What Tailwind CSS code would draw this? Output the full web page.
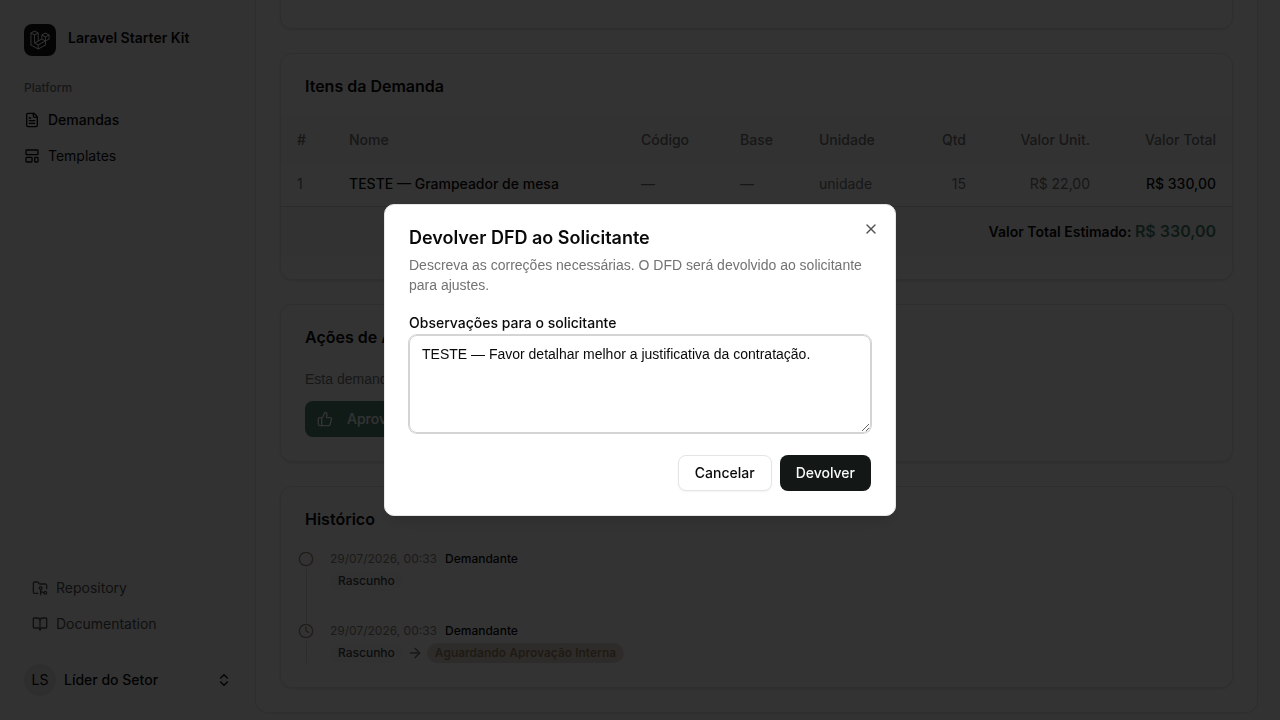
<!DOCTYPE html>
<html lang="pt-BR">
<head>
  <meta charset="UTF-8" />
  <meta name="viewport" content="width=device-width, initial-scale=1.0"/>
  <title>Demanda - Laravel Starter Kit</title>
  <script src="https://cdn.jsdelivr.net/npm/@tailwindcss/browser@4"></script>
  <style>
    body, button {
      font-family: Inter, "Liberation Sans", sans-serif;
    }
    .copy {
      font-family: "Liberation Sans", sans-serif;
    }
  </style>
</head>
<body class="h-screen overflow-hidden bg-neutral-50 text-neutral-950 flex pr-[15px]">

  <!-- Sidebar -->
  <aside class="w-64 shrink-0 p-2 flex flex-col text-sm">
    <div class="p-2">
      <a href="#" class="flex items-center gap-3 h-12 px-2 font-semibold">
        <span class="size-8 rounded-lg bg-neutral-900 flex items-center justify-center">
          <svg class="size-5 fill-white" viewBox="0 0 40 42"><path fill-rule="evenodd" clip-rule="evenodd" d="M17.2 5.633 8.6.855 0 5.633v26.51l16.2 9 16.2-9v-8.442l7.6-4.223V9.856l-8.6-4.777-8.6 4.777V18.3l-5.6 3.111V5.633ZM38 18.301l-5.6 3.11v-6.157l5.6-3.11V18.3Zm-1.06-7.856-5.54 3.078-5.54-3.079 5.54-3.078 5.54 3.079ZM24.8 18.3v-6.157l5.6 3.111v6.158L24.8 18.3Zm-1 1.732 5.54 3.078-13.14 7.302-5.54-3.078 13.14-7.3v-.002Zm-16.2 7.89 7.6 4.222V38.3L2 30.966V7.92l5.6 3.111v16.892ZM8.6 9.3 3.06 6.222 8.6 3.143l5.54 3.08L8.6 9.3Zm21.8 15.51-13.2 7.334V38.3l13.2-7.334v-6.156ZM9.6 11.034l5.6-3.11v14.6l-5.6 3.11v-14.6Z"/></svg>
        </span>
        <span class="pb-1">Laravel Starter Kit</span>
      </a>
    </div>

    <nav class="px-2 flex-1">
      <div class="h-8 px-2 flex items-center text-xs font-medium text-neutral-500">Platform</div>
      <div class="flex flex-col gap-1">
        <a href="#" class="h-8 px-2 flex items-center gap-2 rounded-lg bg-neutral-100/50 font-medium">
          <svg class="size-4" viewBox="0 0 24 24" fill="none" stroke="currentColor" stroke-width="2" stroke-linecap="round" stroke-linejoin="round"><path d="M15 2H6a2 2 0 0 0-2 2v16a2 2 0 0 0 2 2h12a2 2 0 0 0 2-2V7Z"/><path d="M14 2v4a2 2 0 0 0 2 2h4"/><path d="M10 9H8"/><path d="M16 13H8"/><path d="M16 17H8"/></svg>
          Demandas
        </a>
        <a href="#" class="h-8 px-2 flex items-center gap-2 rounded-lg">
          <svg class="size-4" viewBox="0 0 24 24" fill="none" stroke="currentColor" stroke-width="2" stroke-linecap="round" stroke-linejoin="round"><rect width="18" height="7" x="3" y="3" rx="1"/><rect width="9" height="7" x="3" y="14" rx="1"/><rect width="5" height="7" x="16" y="14" rx="1"/></svg>
          Templates
        </a>
      </div>
    </nav>

    <div class="p-2 flex flex-col gap-2">
      <div class="p-2 flex flex-col gap-1 text-neutral-600">
        <a href="#" class="h-8 px-2 flex items-center gap-2">
          <svg class="size-4" viewBox="0 0 24 24" fill="none" stroke="currentColor" stroke-width="2" stroke-linecap="round" stroke-linejoin="round"><path d="M9 20H4a2 2 0 0 1-2-2V5a2 2 0 0 1 2-2h3.9a2 2 0 0 1 1.69.9l.81 1.2a2 2 0 0 0 1.67.9H20a2 2 0 0 1 2 2v5"/><circle cx="13" cy="12" r="2"/><path d="M18 19c-2.8 0-5-2.2-5-5v8"/><circle cx="20" cy="19" r="2"/></svg>
          Repository
        </a>
        <a href="#" class="h-8 px-2 flex items-center gap-2">
          <svg class="size-4" viewBox="0 0 24 24" fill="none" stroke="currentColor" stroke-width="2" stroke-linecap="round" stroke-linejoin="round"><path d="M12 7v14"/><path d="M3 18a1 1 0 0 1-1-1V4a1 1 0 0 1 1-1h5a4 4 0 0 1 4 4 4 4 0 0 1 4-4h5a1 1 0 0 1 1 1v13a1 1 0 0 1-1 1h-6a3 3 0 0 0-3 3 3 3 0 0 0-3-3z"/></svg>
          Documentation
        </a>
      </div>
      <button class="h-12 px-2 flex items-center gap-2 text-left">
        <span class="size-8 rounded-full bg-neutral-200 flex items-center justify-center">LS</span>
        <span class="flex-1 font-medium">Líder do Setor</span>
        <svg class="size-4" viewBox="0 0 24 24" fill="none" stroke="currentColor" stroke-width="2" stroke-linecap="round" stroke-linejoin="round"><path d="m7 15 5 5 5-5"/><path d="m7 9 5-5 5 5"/></svg>
      </button>
    </div>
  </aside>

  <!-- Page content, scrolled to the end -->
  <main class="flex-1 min-w-0 mr-2 mb-2 rounded-b-xl bg-white shadow-sm ring-1 ring-neutral-200 px-6 pb-6 flex flex-col justify-end gap-6 text-sm">

    <section class="shrink-0 h-40 rounded-xl border border-neutral-200 shadow-sm"></section>

    <section class="shrink-0 rounded-xl border border-neutral-200 shadow-sm py-6 flex flex-col gap-6">
      <h2 class="px-6 text-base leading-4 font-semibold">Itens da Demanda</h2>
      <table class="w-full table-fixed">
        <colgroup>
          <col class="w-[52px]"><col><col class="w-[99px]"><col class="w-[79px]"><col class="w-[87px]"><col class="w-[92px]"><col class="w-[124px]"><col class="w-[126px]">
        </colgroup>
        <thead class="bg-neutral-100/70 text-neutral-500">
          <tr class="h-11 text-left">
            <th class="px-4 font-medium">#</th>
            <th class="px-4 font-medium">Nome</th>
            <th class="px-4 font-medium">Código</th>
            <th class="px-4 font-medium">Base</th>
            <th class="px-4 font-medium">Unidade</th>
            <th class="px-4 font-medium text-right">Qtd</th>
            <th class="px-4 font-medium text-right">Valor Unit.</th>
            <th class="px-4 font-medium text-right">Valor Total</th>
          </tr>
        </thead>
        <tbody>
          <tr class="h-11 text-neutral-500">
            <td class="px-4">1</td>
            <td class="px-4 font-medium text-neutral-950">TESTE — Grampeador de mesa</td>
            <td class="px-4">—</td>
            <td class="px-4">—</td>
            <td class="px-4">unidade</td>
            <td class="px-4 text-right">15</td>
            <td class="px-4 text-right">R$ 22,00</td>
            <td class="px-4 text-right font-medium text-neutral-950">R$ 330,00</td>
          </tr>
        </tbody>
        <tfoot>
          <tr class="h-[49px] border-t border-neutral-300 bg-neutral-50">
            <td colspan="8" class="px-4 text-right font-semibold">Valor Total Estimado: <span class="text-base font-semibold text-[#46806f]">R$ 330,00</span></td>
          </tr>
        </tfoot>
      </table>
    </section>

    <section class="shrink-0 rounded-xl border border-neutral-200 shadow-sm p-6 flex flex-col">
      <h2 class="text-base leading-4 font-semibold">Ações de Aprovação</h2>
      <p class="copy mt-6 text-neutral-500">Esta demanda aguarda sua aprovação.</p>
      <div class="mt-3 flex gap-2">
        <button class="h-9 px-3 rounded-lg bg-[#508676] text-white font-medium flex items-center gap-3.5">
          <svg class="size-4" viewBox="0 0 24 24" fill="none" stroke="currentColor" stroke-width="2" stroke-linecap="round" stroke-linejoin="round"><path d="M7 10v12"/><path d="M15 5.88 14 10h5.83a2 2 0 0 1 1.92 2.56l-2.33 8A2 2 0 0 1 17.5 22H4a2 2 0 0 1-2-2v-8a2 2 0 0 1 2-2h2.76a2 2 0 0 0 1.79-1.11L12 2a3.13 3.13 0 0 1 3 3.88Z"/></svg>
          Aprovar
        </button>
        <button class="h-9 px-4 rounded-lg border border-neutral-200 font-medium">Devolver</button>
      </div>
    </section>

    <section class="shrink-0 rounded-xl border border-neutral-200 shadow-sm p-6 flex flex-col gap-6">
      <h2 class="text-base leading-4 font-semibold">Histórico</h2>
      <ol class="-ml-[7px] text-xs">
        <li class="flex gap-4">
          <div class="flex flex-col items-center gap-0.5">
            <svg class="size-4 text-[#a08c78]" viewBox="0 0 24 24" fill="none" stroke="currentColor" stroke-width="2"><circle cx="12" cy="12" r="10"/></svg>
            <span class="w-px flex-1 bg-neutral-300"></span>
          </div>
          <div class="pb-8">
            <p class="flex gap-2"><time class="text-[#8c8278]">29/07/2026, 00:33</time><span class="font-medium">Demandante</span></p>
            <p class="mt-1 flex"><span class="h-5 px-2 rounded-full bg-neutral-50 leading-5 font-medium text-neutral-700">Rascunho</span></p>
          </div>
        </li>
        <li class="flex gap-4">
          <div class="flex flex-col items-center gap-0.5">
            <svg class="size-4 text-[#a08c78]" viewBox="0 0 24 24" fill="none" stroke="currentColor" stroke-width="2" stroke-linecap="round" stroke-linejoin="round"><circle cx="12" cy="12" r="10"/><path d="M12 6v6l4 2"/></svg>
            <span class="w-px flex-1 bg-neutral-300"></span>
          </div>
          <div>
            <p class="flex gap-2"><time class="text-[#8c8278]">29/07/2026, 00:33</time><span class="font-medium">Demandante</span></p>
            <p class="mt-1 flex items-center gap-1">
              <span class="h-5 px-2 rounded-full bg-neutral-50 leading-5 font-medium text-neutral-700">Rascunho</span>
              <svg class="size-4 text-neutral-500" viewBox="0 0 24 24" fill="none" stroke="currentColor" stroke-width="2" stroke-linecap="round" stroke-linejoin="round"><path d="M5 12h14"/><path d="m12 5 7 7-7 7"/></svg>
              <span class="h-5 px-2 rounded-full bg-[#e1ddd2] leading-5 font-semibold text-[#a08264]">Aguardando Aprovação Interna</span>
            </p>
          </div>
        </li>
      </ol>
    </section>
  </main>

  <!-- Dialog -->
  <div id="dialog" class="fixed inset-0 z-50 bg-black/80 flex items-center justify-center">
    <div role="dialog" aria-labelledby="dialogTitle" class="relative w-full max-w-lg rounded-[10px] border border-neutral-200 bg-white p-6 shadow-lg flex flex-col gap-4 text-sm">
      <div class="flex flex-col gap-2">
        <h2 id="dialogTitle" class="text-lg leading-[18px] font-semibold">Devolver DFD ao Solicitante</h2>
        <p class="copy text-neutral-500">Descreva as correções necessárias. O DFD será devolvido ao solicitante para ajustes.</p>
      </div>
      <div class="pb-1.5">
        <label for="notes" class="block leading-6 font-medium">Observações para o solicitante</label>
        <textarea id="notes" rows="4" class="copy block w-full rounded-lg border border-neutral-300 px-3 py-2 ring-1 ring-neutral-300 outline-none resize-y">TESTE — Favor detalhar melhor a justificativa da contratação.</textarea>
      </div>
      <div class="flex justify-end gap-2">
        <button onclick="closeDialog()" class="h-9 px-4 rounded-lg border border-neutral-200 bg-white shadow-xs font-medium">Cancelar</button>
        <button onclick="closeDialog()" class="h-9 px-4 rounded-lg bg-[#131817] text-neutral-50 font-medium">Devolver</button>
      </div>
      <button onclick="closeDialog()" aria-label="Fechar" class="absolute top-4 right-4 text-neutral-600">
        <svg class="size-4" viewBox="0 0 24 24" fill="none" stroke="currentColor" stroke-width="2" stroke-linecap="round" stroke-linejoin="round"><path d="M18 6 6 18"/><path d="m6 6 12 12"/></svg>
      </button>
    </div>
  </div>

  <script>
    function closeDialog() {
      document.getElementById("dialog").classList.add("hidden");
    }
  </script>

</body>
</html>
